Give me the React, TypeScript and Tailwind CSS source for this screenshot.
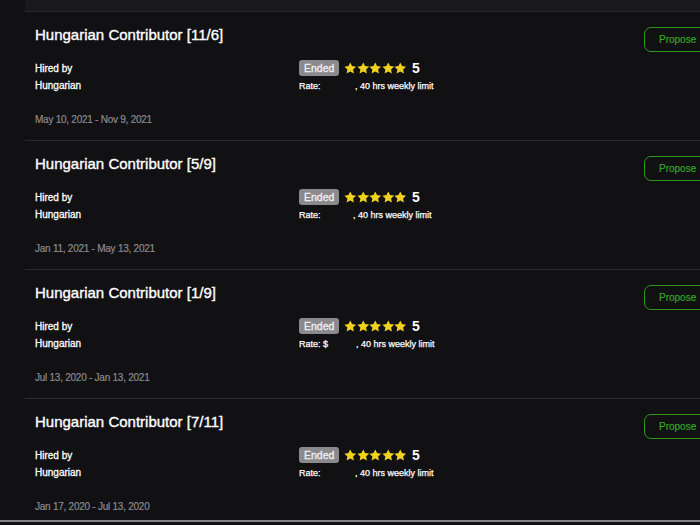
type Contract = {
    title: string
    rate: string
    gap: number
    dates: string
}

const contracts: Contract[] = [
    { title: 'Hungarian Contributor [11/6]', rate: '', gap: 32, dates: 'May 10, 2021 - Nov 9, 2021' },
    { title: 'Hungarian Contributor [5/9]', rate: '', gap: 30, dates: 'Jan 11, 2021 - May 13, 2021' },
    { title: 'Hungarian Contributor [1/9]', rate: '$', gap: 28, dates: 'Jul 13, 2020 - Jan 13, 2021' },
    { title: 'Hungarian Contributor [7/11]', rate: '', gap: 32, dates: 'Jan 17, 2020 - Jul 13, 2020' }
]

function Star() {
    return (
        <svg viewBox="0 0 24 24" className="h-[12.5px] w-[12.5px]">
            <path
                d="M12 .8l3.4 7.1 7.8 1-5.7 5.4 1.5 7.8L12 18.3l-7 3.8 1.5-7.8L.8 8.9l7.8-1z"
                fill="#efd11f"
            />
        </svg>
    )
}

function ContractRow({ c, last }: { c: Contract; last?: boolean }) {
    return (
        <div
            className={`flex justify-between pl-[10px] pt-[13px] ${
                last ? 'h-[121px]' : 'h-[129px] border-b border-[#2b2a2e]'
            }`}
        >
            <div className="flex flex-col">
                <h2 className="text-[15px] leading-5 text-white [-webkit-text-stroke:0.35px_#fff]">{c.title}</h2>

                <div className="mt-[15px] flex">
                    {/* left info */}
                    <div className="flex w-[264px] flex-col text-[10px] leading-[17px] text-white [-webkit-text-stroke:0.3px_#fff]">
                        <span>Hired by</span>
                        <span>Hungarian</span>
                    </div>

                    {/* status + rating */}
                    <div className="flex flex-col">
                        <div className="flex items-center">
                            <span className="rounded-[3px] bg-[#8a898c] px-[5px] text-[10.5px] leading-4 text-[#f0f0f0] [-webkit-text-stroke:0.3px_#f0f0f0]">
                                Ended
                            </span>
                            <div className="ml-[5px] flex">
                                <Star />
                                <Star />
                                <Star />
                                <Star />
                                <Star />
                            </div>
                            <span className="ml-[5px] text-[14px] font-bold leading-4 text-white">5</span>
                        </div>
                        <div className="mt-[4px] text-[9px] leading-3 text-white [-webkit-text-stroke:0.25px_#fff]">
                            Rate: {c.rate}
                            <span className="inline-block" style={{ width: c.gap }} />, 40 hrs weekly limit
                        </div>
                    </div>
                </div>

                <div className="mt-[18px] text-[10px] leading-4 tracking-[-0.25px] text-[#8b8a8f] [-webkit-text-stroke:0.2px_#8b8a8f]">
                    {c.dates}
                </div>
            </div>

            <button className="mr-[-30px] mt-[2px] h-[25px] w-[86px] self-start rounded-[7px] border-[1.5px] border-[#2c981c] pl-[14px] text-left text-[10px] text-[#36a524] [-webkit-text-stroke:0.2px_#36a524]">
                Propose
            </button>
        </div>
    )
}

export default function App() {
    return (
        <div
            className="h-[525px] w-[700px] overflow-hidden bg-[#111013]"
            style={{ fontFamily: '"Liberation Sans", Arial, sans-serif' }}
        >
            <div className="ml-[25px]">
                <div className="h-[12px] border-b border-[#2b2a2e] bg-[#19181b]" />
                {contracts.map((c, i) => (
                    <ContractRow key={c.title} c={c} last={i === contracts.length - 1} />
                ))}
            </div>
            <div className="h-[2px] bg-[#858487]" />
        </div>
    )
}
